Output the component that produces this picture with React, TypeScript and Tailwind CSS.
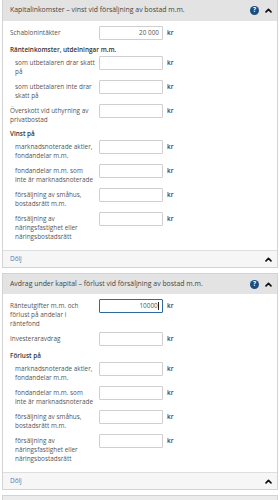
import React from "react";

type Row =
  | { kind: "head"; text: string }
  | { kind: "field"; lines: string[]; nested?: boolean; value?: string; focused?: boolean };

const panel1: Row[] = [
  { kind: "field", lines: ["Schablonintäkter"], value: "20 000" },
  { kind: "head", text: "Ränteinkomster, utdelningar m.m." },
  { kind: "field", lines: ["som utbetalaren drar skatt", "på"], nested: true },
  { kind: "field", lines: ["som utbetalaren inte drar", "skatt på"], nested: true },
  { kind: "field", lines: ["Överskott vid uthyrning av", "privatbostad"] },
  { kind: "head", text: "Vinst på" },
  { kind: "field", lines: ["marknadsnoterade aktier,", "fondandelar m.m."], nested: true },
  { kind: "field", lines: ["fondandelar m.m. som", "inte är marknadsnoterade"], nested: true },
  { kind: "field", lines: ["försäljning av småhus,", "bostadsrätt m.m."], nested: true },
  { kind: "field", lines: ["försäljning av", "näringsfastighet eller", "näringsbostadsrätt"], nested: true },
];

const panel2: Row[] = [
  { kind: "field", lines: ["Ränteutgifter m.m. och", "förlust på andelar i", "räntefond"], value: "10000", focused: true },
  { kind: "field", lines: ["Investeraravdrag"] },
  { kind: "head", text: "Förlust på" },
  { kind: "field", lines: ["marknadsnoterade aktier,", "fondandelar m.m."], nested: true },
  { kind: "field", lines: ["fondandelar m.m. som", "inte är marknadsnoterade"], nested: true },
  { kind: "field", lines: ["försäljning av småhus,", "bostadsrätt m.m."], nested: true },
  { kind: "field", lines: ["försäljning av", "näringsfastighet eller", "näringsbostadsrätt"], nested: true },
];

function Chevron() {
  return (
    <svg width="7" height="5" viewBox="0 0 10 7" className="shrink-0">
      <polyline points="1.5,5.5 5,2 8.5,5.5" fill="none" stroke="#111" strokeWidth="2.4" strokeLinecap="round" strokeLinejoin="round" />
    </svg>
  );
}

function Help() {
  return (
    <span className="flex h-[9px] w-[9px] items-center justify-center rounded-full bg-[#1c4d80] text-[6.5px] font-bold leading-none text-white">?</span>
  );
}

function Field({ row }: { row: Extract<Row, { kind: "field" }> }) {
  return (
    <div className="mb-[4px] flex items-start">
      <div className={`w-[89px] shrink-0 pt-[2px] leading-[9px] text-[#555] ${row.nested ? "pl-[5px]" : ""}`}>
        {row.lines.map((l) => (
          <div key={l} className="whitespace-nowrap">{l}</div>
        ))}
      </div>
      <div
        className={`flex h-[14px] w-[64px] shrink-0 items-center justify-end rounded-[1px] bg-white pr-[3px] text-[#555] ${
          row.focused ? "border-[1.5px] border-[#2f6a9e]" : "border border-[#cfcfcf]"
        }`}
      >
        {row.value}
        {row.focused && <span className="ml-[0.5px] h-[8px] w-[0.75px] bg-[#222]" />}
      </div>
      <span className="ml-[4px] pt-[2px] leading-[9px] font-semibold text-[#4a3535]">kr</span>
    </div>
  );
}

function Panel({ title, rows, first }: { title: string; rows: Row[]; first?: boolean }) {
  return (
    <div className={`mb-[5px] border border-[#d3d3d3] ${first ? "border-t-0" : ""}`}>
      <div className={`flex items-center bg-[#e3e3e3] pl-[7px] pr-[5px] text-[6.9px] text-[#444] ${first ? "h-[21px]" : "h-[20px]"}`}>
        <span className="flex-1 whitespace-nowrap">{title}</span>
        <Help />
        <span className="ml-[6px]"><Chevron /></span>
      </div>
      <div className="bg-white pb-[5px] pl-[7px] pt-[5px]">
        {rows.map((r, i) =>
          r.kind === "head" ? (
            <div key={i} className="mb-[2px] pt-[1px] leading-[9px] font-semibold text-[#333]">{r.text}</div>
          ) : (
            <Field key={i} row={r} />
          )
        )}
      </div>
      <div className="flex h-[17px] items-center border-t border-[#dedede] bg-[#f6f6f6] pl-[7px] pr-[5px]">
        <span className="flex-1 text-[#3b7dbd]">Dölj</span>
        <Chevron />
      </div>
    </div>
  );
}

export default function App() {
  return (
    <div className="h-[500px] overflow-hidden bg-white px-[2px] font-['Open_Sans',sans-serif] text-[6.4px]">
      <Panel first title="Kapitalinkomster – vinst vid försäljning av bostad m.m." rows={panel1} />
      <Panel title="Avdrag under kapital – förlust vid försäljning av bostad m.m." rows={panel2} />
      <div className="border border-[#d3d3d3]">
        <div className="h-[20px] bg-[#ececec]" />
      </div>
    </div>
  );
}
